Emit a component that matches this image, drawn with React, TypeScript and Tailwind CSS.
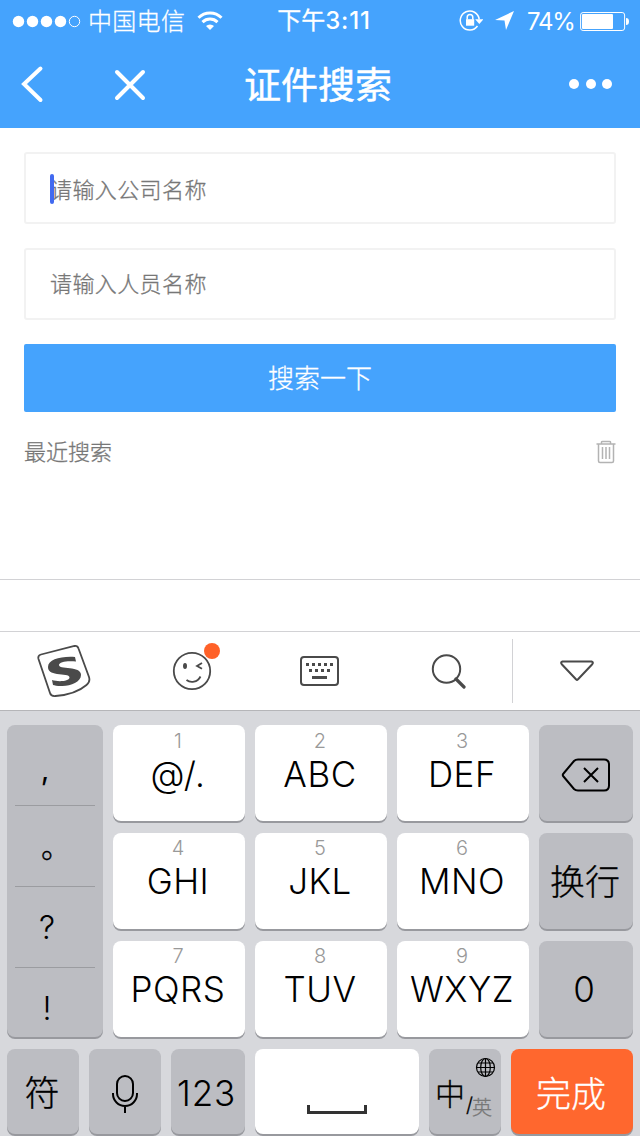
import React from "react";

const KEY = "flex rounded-lg shadow-[0_2px_0_#98999e] text-black";

function LetterKey({ digit, label, first }: { digit: string; label: string; first?: boolean }) {
  return (
    <button className={`${KEY} h-24 w-[132px] flex-col items-center bg-white pr-[2px] ${first ? "pt-[4px]" : "pt-[3px]"}`}>
      <span className="h-6 text-[20px] leading-6 font-light text-[#999]">{digit}</span>
      <span className="h-11 text-[35px] leading-[43px] font-light tracking-[0.5px] whitespace-nowrap">{label}</span>
    </button>
  );
}

function StatusBar() {
  return (
    <div className="grid h-10 grid-cols-[1fr_auto_1fr] items-center text-[24px] leading-10">
      <div className="flex h-10 items-center pl-3">
        <svg width="70" height="14" viewBox="0 0 70 14" fill="white">
          <circle cx="6.5" cy="7.500" r="5.700" />
          <circle cx="20.5" cy="7.500" r="5.700" />
          <circle cx="34.5" cy="7.500" r="5.700" />
          <circle cx="48.5" cy="7.500" r="5.700" />
          <circle cx="62.5" cy="7.500" r="5.200" fill="none" stroke="white" />
        </svg>
        <span className="mt-[2px] ml-[6px] font-light tracking-[0.3px] [-webkit-text-stroke:0.3px]">中国电信</span>
        <svg className="ml-3" width="26" height="20" viewBox="0 0 26 20" fill="none" stroke="white" strokeWidth="3">
          <path d="M1.500 6.800a16.300 16.300 0 0 1 23 0" />
          <path d="M5.500 11.100a10.700 10.700 0 0 1 15 0" />
          <path d="M13 19l-4-4a5.800 5.800 0 0 1 8 0z" fill="white" stroke="none" />
        </svg>
      </div>
      <div className="flex pt-px pl-[8px] font-medium">
        <span className="font-normal [-webkit-text-stroke:0.3px]">下午</span>
        <span className="tracking-[0.800px]">3:11</span>
      </div>
      <div className="flex h-10 items-center justify-end pr-[10px]">
        <svg width="24" height="22" viewBox="0 0 24 22" fill="none" stroke="white" strokeWidth="1.500">
          <path d="M18.500 16A9.500 9.500 0 1 1 20.200 9.300" />
          <path d="M16.200 9.300h8.200L20.300 14z" fill="white" stroke="none" />
          <path d="M8.200 9.500V7.300a2.800 2.800 0 0 1 5.600 0v2.200" />
          <path d="M7 9.200h8.200v6.500H7z" fill="white" stroke="none" />
        </svg>
        <svg className="ml-3" width="19" height="19" viewBox="0 0 19 19" fill="white">
          <path d="M19 0L11 19 9.500 9.500 0 9z" />
        </svg>
        <span className="mt-[2px] ml-[13px] w-[47px] tracking-[-1.2px]">74%</span>
        <svg className="ml-[6px]" width="50" height="20" viewBox="0 0 50 20">
          <rect x=".6" y="1.500" width="44" height="18" rx="2.500" fill="none" stroke="white" />
          <rect x="2" y="3" width="31" height="15" rx="1" fill="white" />
          <path d="M46 7c2 0 3 1 3 3.500s-1 3.500-3 3.500z" fill="white" />
        </svg>
      </div>
    </div>
  );
}

function NavBar() {
  return (
    <div className="grid h-[88px] grid-cols-[1fr_auto_1fr] items-center">
      <div className="flex items-center pl-5">
        <svg width="24" height="38" viewBox="0 0 24 38" fill="none" stroke="white" strokeWidth="4" strokeLinecap="round">
          <path d="M20.500 3.500L4 19l16.500 16" />
        </svg>
        <svg className="mt-[1px] ml-[70px]" width="32" height="32" viewBox="0 0 32 32" fill="none" stroke="white" strokeWidth="4" strokeLinecap="round">
          <path d="M3 3l26 26M29 3L3 29" />
        </svg>
      </div>
      <h1 className="h-[88px] pt-[2px] pr-1 text-[37px] leading-[88px] font-normal [-webkit-text-stroke:0.5px]">证件搜索</h1>
      <div className="flex items-center justify-end gap-[6.500px] pr-7">
        <i className="size-[10px] rounded-full bg-white" />
        <i className="size-[10px] rounded-full bg-white" />
        <i className="size-[10px] rounded-full bg-white" />
      </div>
    </div>
  );
}

function SearchForm() {
  return (
    <main className="flex h-[451px] flex-col px-6 pt-6 text-[22px] font-light text-[#777] [-webkit-text-stroke:0.3px]">
      <div className="relative flex h-[72px] items-center rounded-[3px] border-2 border-[#f2f2f2] pt-[5px] pl-6">
        <span className="tracking-[0.400px]">请输入公司名称</span>
        <i className="absolute top-5 left-6 h-[30px] w-1 rounded-sm bg-[#426af0]" />
      </div>
      <div className="mt-6 flex h-[72px] items-center rounded-[3px] border-2 border-[#f2f2f2] pt-px pl-6">
        <span className="tracking-[0.400px]">请输入人员名称</span>
      </div>
      <button className="mt-6 h-[68px] rounded-[2px] bg-[#45a3fd] text-[26px] leading-[67px] text-white">搜索一下</button>
      <div className="mt-5 flex h-10 items-center justify-between">
        <span className="pt-px">最近搜索</span>
        <svg width="20" height="24" viewBox="0 0 20 24" fill="none" stroke="#b3b3b3" strokeWidth="1.500">
          <path d="M.5 4h19M5.500 3.500V2Q5.500 1.500 6.500 1.500h7Q14.500 1.500 14.500 2v1.500M2.500 4v17q0 1.500 1.500 1.500h12q1.500 0 1.500-1.500V4M6.500 7v12M10 7v12M13.500 7v12" />
        </svg>
      </div>
    </main>
  );
}

function Toolbar() {
  return (
    <div className="flex h-[80px] items-center border-t border-b border-t-[#d2d2d5] border-b-[#b5b5b8] bg-white text-[#4a4a4a]">
      <div className="flex w-32 justify-center">
        <svg width="54" height="54" viewBox="0 0 54 54" fill="none" stroke="currentColor" strokeWidth="1.800">
          <path d="M4 10.500L37.500 2q3-.5 4 2.500L52 33q1.500 5-2.500 8-11 9.500-31 11-4.500.5-5.500-3L1.500 15Q.5 11.500 4 10.500z" />
          <path d="M38 13L39 17.500C31 16.500 22 17.500 22 21C22 24 30 23.500 35 24.500C41 25.500 44 27.500 44 31C44 38 33 42.500 24 42C20 42 17.500 41.500 16 41L15 36C21 38 32 37.500 32.500 33.500C32.500 30.500 26 31 20 30C14 29 11 27 11 23C11 15.500 24 12 38 13Z" fill="currentColor" stroke="none" />
        </svg>
      </div>
      <div className="flex w-32 justify-center">
        <div className="relative">
          <svg width="40" height="40" viewBox="0 0 40 40" fill="none" stroke="currentColor" strokeWidth="1.800">
            <circle cx="20" cy="20" r="18.200" />
            <ellipse cx="13" cy="15" rx="2" ry="3" fill="currentColor" stroke="none" />
            <path d="M30 12L25 15l5 2.800M14.500 29c4 3.300 11 2.500 14-3.500" />
          </svg>
          <i className="absolute -top-[8px] -right-[8px] size-4 rounded-full bg-[#ff6128]" />
        </div>
      </div>
      <div className="flex w-32 justify-center">
        <svg width="40" height="30" viewBox="0 0 40 30" fill="none" stroke="currentColor" strokeWidth="2">
          <rect x="1" y="1" width="37" height="28" rx="3" />
          <path d="M6 8.500h27" strokeWidth="3" strokeDasharray="3 3" />
          <path d="M9 14.500h21" strokeWidth="3" strokeDasharray="3 3" />
          <path d="M12 21.500h15" strokeWidth="3" />
        </svg>
      </div>
      <div className="flex w-32 justify-center">
        <svg width="36" height="36" viewBox="0 0 36 36" fill="none" stroke="currentColor" strokeWidth="2">
          <circle cx="16.500" cy="16" r="13.700" />
          <path d="M26 26l8 8" strokeWidth="3.200" strokeLinecap="round" />
        </svg>
      </div>
      <div className="flex h-16 w-32 items-center justify-center border-l border-[#d2d2d5]">
        <svg width="36" height="22" viewBox="0 0 36 22" fill="none" stroke="currentColor" strokeWidth="2" strokeLinejoin="round">
          <path d="M3.500 1.500h29q2.500 1 .5 3L18.800 19.500q-.8 1-1.600 0L3 4.500q-2-2 .5-3z" />
        </svg>
      </div>
    </div>
  );
}

function Keyboard() {
  return (
    <div className="flex h-[425px] flex-col gap-3 bg-[#d7d8dc] px-[7px] pt-[14px]">
      <div className="flex gap-[10px]">
        <div className={`${KEY} h-[312px] w-24 flex-col bg-[#bcbdc2] px-2 text-[32px] font-light`}>
          <span className="h-[81px] border-b border-[#9b9ca0] pt-[22px] pr-5 text-center text-[30px] leading-[44px] font-normal">,</span>
          <span className="h-[81px] border-b border-[#9b9ca0] pt-[19px] pl-[26px] text-[30px] leading-[44px] [-webkit-text-stroke:0.4px]">。</span>
          <span className="h-[81px] border-b border-[#9b9ca0] pt-[19px] pr-4 text-center leading-[44px]">?</span>
          <span className="pt-[19px] pr-4 text-center leading-[44px]">!</span>
        </div>
        <div className="grid grid-cols-3 gap-x-[10px] gap-y-3">
          <LetterKey first digit="1" label="@/." />
          <LetterKey first digit="2" label="ABC" />
          <LetterKey first digit="3" label="DEF" />
          <LetterKey digit="4" label="GHI" />
          <LetterKey digit="5" label="JKL" />
          <LetterKey digit="6" label="MNO" />
          <LetterKey digit="7" label="PQRS" />
          <LetterKey digit="8" label="TUV" />
          <LetterKey digit="9" label="WXYZ" />
        </div>
        <div className="flex w-[94px] flex-col gap-3 text-[35px] font-light">
          <button className={`${KEY} h-24 items-center justify-center bg-[#bcbdc2] pt-1`}>
            <svg width="50" height="34" viewBox="0 0 50 34" fill="none" stroke="black" strokeWidth="2">
              <path d="M17 1.500h26q5 0 5 5v21q0 5-5 5H17q-2.500 0-4-1.500L2.500 18.500q-1.500-1.500 0-3L13 3q1.500-1.500 4-1.500zM23 10l14 14M37 10L23 24" />
            </svg>
          </button>
          <button className={`${KEY} h-24 items-center justify-center bg-[#bcbdc2] pt-[3px] pr-[2px] [-webkit-text-stroke:0.3px]`}>换行</button>
          <button className={`${KEY} h-24 items-center justify-center bg-[#bcbdc2] pt-[1px] pr-[4px]`}>0</button>
        </div>
      </div>
      <div className="flex gap-[10px] text-[35px] font-light">
        <button className={`${KEY} h-[85px] w-[72px] items-center justify-center bg-[#bcbdc2] pt-1 pr-[2px] [-webkit-text-stroke:0.3px]`}>符</button>
        <button className={`${KEY} h-[85px] w-[72px] items-center justify-center bg-[#bcbdc2] pt-1`}>
          <svg width="28" height="40" viewBox="0 0 28 40" fill="none" stroke="black" strokeWidth="2">
            <rect x="6" y="2" width="16" height="25" rx="8" />
            <path d="M2 19v1a12 12 0 0 0 24 0v-1M14 32v7" />
          </svg>
        </button>
        <button className={`${KEY} h-[85px] w-[74px] items-center justify-center bg-[#bcbdc2] pt-[3px] pr-[3px] tracking-[0.800px]`}>123</button>
        <button className={`${KEY} h-[85px] w-[164px] items-end justify-center bg-white pb-5`}>
          <i className="h-[9px] w-[60px] border-x-3 border-b-3 border-[#333]" />
        </button>
        <button className={`${KEY} relative h-[85px] w-[72px] bg-[#bcbdc2] [-webkit-text-stroke:0.3px]`}>
          <span className="pt-[25px] pl-[6px] text-[30px] leading-[40px]">中</span>
          <span className="pt-[39px] pl-[1px] text-[20px] leading-[34px]">/</span>
          <span className="-ml-px pt-[42px] text-[20px] leading-[34px] text-[#777]">英</span>
          <svg className="absolute top-[8px] right-[5px]" width="21" height="21" viewBox="0 0 21 21" fill="none" stroke="black" strokeWidth="1.200">
            <circle cx="10.500" cy="10.500" r="9" />
            <ellipse cx="10.500" cy="10.500" rx="4.800" ry="9" />
            <path d="M10.500 1.500v18M1.500 10.500h18M3 6h15M3 15h15" />
          </svg>
        </button>
        <button className={`${KEY} h-[85px] w-[122px] items-center justify-center bg-[#ff672e] pt-[5px] pr-[2px]`}>
          <span className="text-white [-webkit-text-stroke:0.3px]">完成</span>
        </button>
      </div>
    </div>
  );
}

export default function App() {
  return (
    <div className="flex h-[1136px] w-[640px] flex-col overflow-hidden bg-white font-['Inter','Noto_Sans_CJK_SC',sans-serif]">
      <header className="h-32 bg-[#45a3fd] text-white">
        <StatusBar />
        <NavBar />
      </header>
      <SearchForm />
      <div className="h-[52px] border-t border-[#d2d2d5]" />
      <Toolbar />
      <Keyboard />
    </div>
  );
}
